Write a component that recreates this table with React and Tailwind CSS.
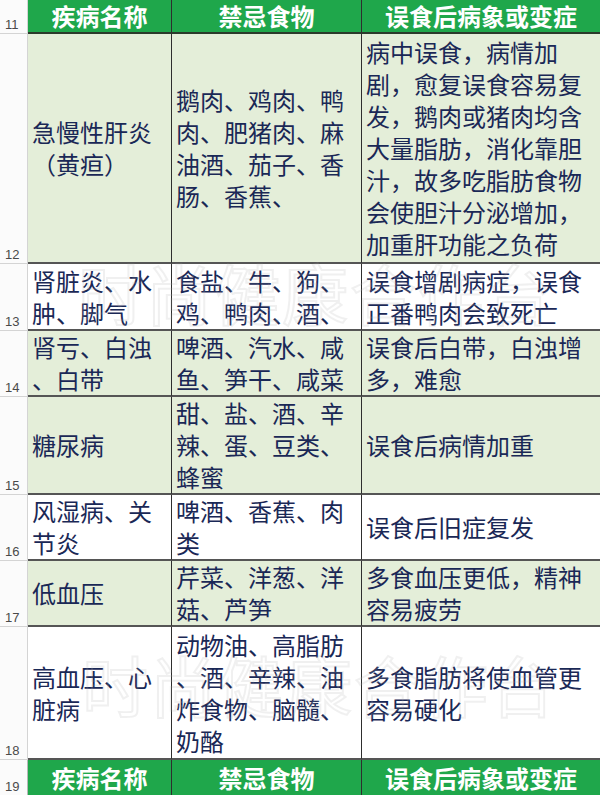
import React from "react";

const rows = [
  {
    n: "12", h: "h-[230px]", bg: "bg-[#e4eed9]",
    c: [["急慢性肝炎", "（黄疸）"], ["鹅肉、鸡肉、鸭", "肉、肥猪肉、麻", "油酒、茄子、香", "肠、香蕉、"],
      ["病中误食，病情加", "剧，愈复误食容易复", "发，鹅肉或猪肉均含", "大量脂肪，消化靠胆", "汁，故多吃脂肪食物", "会使胆汁分泌增加，", "加重肝功能之负荷"]],
  },
  {
    n: "13", h: "h-[67px]", bg: "bg-white",
    c: [["肾脏炎、水", "肿、脚气"], ["食盐、牛、狗、", "鸡、鸭肉、酒、"], ["误食增剧病症，误食", "正番鸭肉会致死亡"]],
  },
  {
    n: "14", h: "h-[66px]", bg: "bg-[#e4eed9]",
    c: [["肾亏、白浊", "、白带"], ["啤酒、汽水、咸", "鱼、笋干、咸菜"], ["误食后白带，白浊增", "多，难愈"]],
  },
  {
    n: "15", h: "h-[98px]", bg: "bg-[#e4eed9]",
    c: [["糖尿病"], ["甜、盐、酒、辛", "辣、蛋、豆类、", "蜂蜜"], ["误食后病情加重"]],
  },
  {
    n: "16", h: "h-[66px]", bg: "bg-white",
    c: [["风湿病、关", "节炎"], ["啤酒、香蕉、肉", "类"], ["误食后旧症复发"]],
  },
  {
    n: "17", h: "h-[66px]", bg: "bg-[#e4eed9]",
    c: [["低血压"], ["芹菜、洋葱、洋", "菇、芦笋"], ["多食血压更低，精神", "容易疲劳"]],
  },
  {
    n: "18", h: "h-[133px]", bg: "bg-white",
    c: [["高血压、心", "脏病"], ["动物油、高脂肪", "、酒、辛辣、油", "炸食物、脑髓、", "奶酪"], ["多食脂肪将使血管更", "容易硬化"]],
  },
];

const widths = ["w-[144px] border-r border-[#2e2e2e]", "w-[190px] border-r border-[#2e2e2e]", "flex-1"];

function Gutter({ n, last }) {
  return (
    <div className={`w-[28px] shrink-0 bg-[#fbfbfb] border-r border-[#b8b8b8] ${last ? "" : "border-b border-[#d4d4d4]"} flex items-end pl-[5px] pb-[1px]`}>
      <span className="text-[13px] leading-[14px] text-[#4a4a4a] font-['Liberation_Sans',sans-serif]">{n}</span>
    </div>
  );
}

function Header({ n, h, last }) {
  const titles = ["疾病名称", "禁忌食物", "误食后病象或变症"];
  return (
    <div className={`flex ${h}`}>
      <Gutter n={n} last={last} />
      {titles.map((t, i) => (
        <div
          key={i}
          className={`${widths[i]} bg-[#1fa74b] ${last ? "" : "border-b-2 border-b-[#2b3a2b]"} flex items-center justify-center text-white font-bold text-[24px] leading-[30px]`}
        >
          {t}
        </div>
      ))}
    </div>
  );
}

function Watermark({ cls }) {
  return (
    <div
      aria-hidden="true"
      className={`pointer-events-none absolute ${cls} text-[66px] leading-none tracking-[2px] text-transparent [-webkit-text-stroke:2px_rgba(170,170,170,0.18)] whitespace-nowrap select-none`}
    >
      时尚健康合作台
    </div>
  );
}

export default function App() {
  return (
    <div className="relative w-[600px] h-[795px] overflow-hidden bg-white font-['Noto_Sans_CJK_SC','Noto_Sans',sans-serif]">
      <Header n="11" h="h-[34px]" />
      {rows.map((r) => (
        <div key={r.n} className={`flex ${r.h}`}>
          <Gutter n={r.n} />
          {r.c.map((lines, i) => (
            <div
              key={i}
              className={`${widths[i]} ${r.bg} border-b-2 border-b-[#555555] flex flex-col justify-center pl-[4px] text-[24px] leading-[32px] text-[#1a2856] whitespace-nowrap overflow-hidden`}
            >
              {lines.map((l, j) => (
                <div key={j}>{l}</div>
              ))}
            </div>
          ))}
        </div>
      ))}
      <Header n="19" h="h-[35px]" last />
      <Watermark cls="left-[78px] top-[258px]" />
      <Watermark cls="left-[82px] top-[650px]" />
    </div>
  );
}
